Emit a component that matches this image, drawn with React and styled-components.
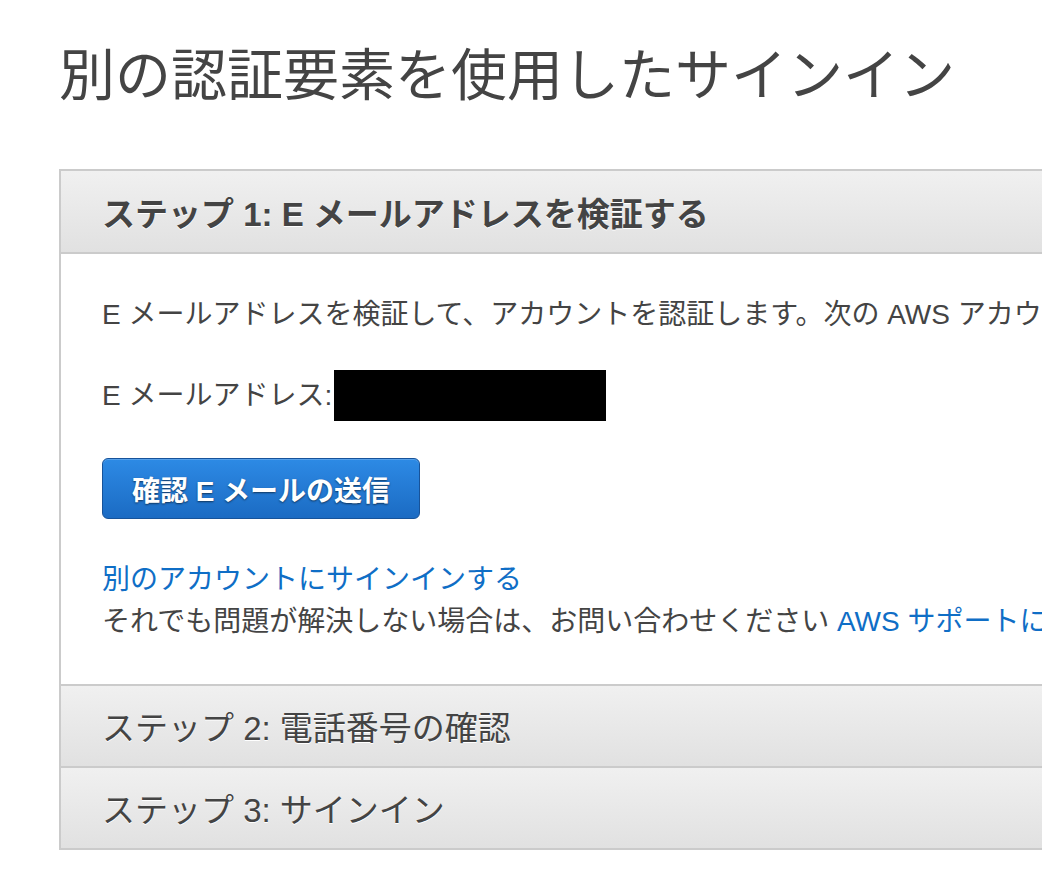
import React from "react";
import styled, { createGlobalStyle } from "styled-components";

const Global = createGlobalStyle`
  html, body { margin: 0; padding: 0; background: #fff; overflow: hidden; }
  body { font-family: "Liberation Sans", "Noto Sans CJK JP", sans-serif; color: #444; }
`;

const Page = styled.div`
  padding: 41px 0 0 59px;
  width: 1300px;
`;

const Title = styled.h1`
  margin: 0;
  font-size: 56px;
  line-height: 70px;
  font-weight: 400;
  color: #444;
  white-space: nowrap;
`;

const Panel = styled.section`
  margin-top: 58px;
  width: 1200px;
  border: 2px solid #cbcbcb;
  border-right: none;
  background: #fff;
`;

const StepHeader = styled.div`
  height: ${(p) => (p.$first ? 81 : 80)}px;
  display: flex;
  align-items: center;
  padding-left: 41px;
  background: linear-gradient(#f0f0f0, #e1e1e1);
  border-top: ${(p) => (p.$first ? "none" : "2px solid #cbcbcb")};
  font-size: 33px;
  font-weight: ${(p) => (p.$active ? 700 : 400)};
  color: #444;
  text-shadow: 0 1px 0 #fff;
  white-space: nowrap;
`;

const Body = styled.div`
  border-top: 2px solid #cbcbcb;
  padding: 40px 40px 41px 41px;
  display: flex;
  flex-direction: column;
  align-items: flex-start;
`;

const Line = styled.p`
  margin: ${(p) => (p.$gap ? `${p.$gap}px 0 0` : "0")};
  font-size: 28px;
  line-height: 42px;
  color: #444;
  white-space: nowrap;
  display: flex;
  align-items: center;
`;

const Redacted = styled.span`
  display: inline-block;
  width: 272px;
  height: 51px;
  background: #000;
  margin-left: 2px;
`;

const PrimaryButton = styled.button`
  margin-top: 37px;
  width: 318px;
  height: 61px;
  border: 1px solid #17539a;
  border-radius: 6px;
  background: linear-gradient(#2d8ae5, #1b6bc3);
  box-shadow: inset 0 1px 0 rgba(255, 255, 255, 0.2);
  color: #fff;
  font-family: inherit;
  font-size: 28px;
  font-weight: 700;
  text-shadow: 0 1px 2px rgba(0, 0, 0, 0.55);
  cursor: pointer;
  padding: 0;
`;

const Links = styled.div`
  margin-top: 40px;
  display: flex;
  flex-direction: column;
`;

const Link = styled.a`
  color: #0f6ec6;
  text-decoration: none;
`;

export default function App() {
  return (
    <Page>
      <Global />
      <Title>別の認証要素を使用したサインイン</Title>
      <Panel>
        <StepHeader $first $active>ステップ 1: E メールアドレスを検証する</StepHeader>
        <Body>
          <Line>E メールアドレスを検証して、アカウントを認証します。次の AWS アカウントに確認メールを送信します。</Line>
          <Line $gap={34}>
            E メールアドレス:<Redacted />
          </Line>
          <PrimaryButton type="button">確認 E メールの送信</PrimaryButton>
          <Links>
            <Line>
              <Link href="#">別のアカウントにサインインする</Link>
            </Line>
            <Line>
              それでも問題が解決しない場合は、お問い合わせください&nbsp;<Link href="#">AWS サポートに</Link>
            </Line>
          </Links>
        </Body>
        <StepHeader>ステップ 2: 電話番号の確認</StepHeader>
        <StepHeader>ステップ 3: サインイン</StepHeader>
      </Panel>
    </Page>
  );
}
